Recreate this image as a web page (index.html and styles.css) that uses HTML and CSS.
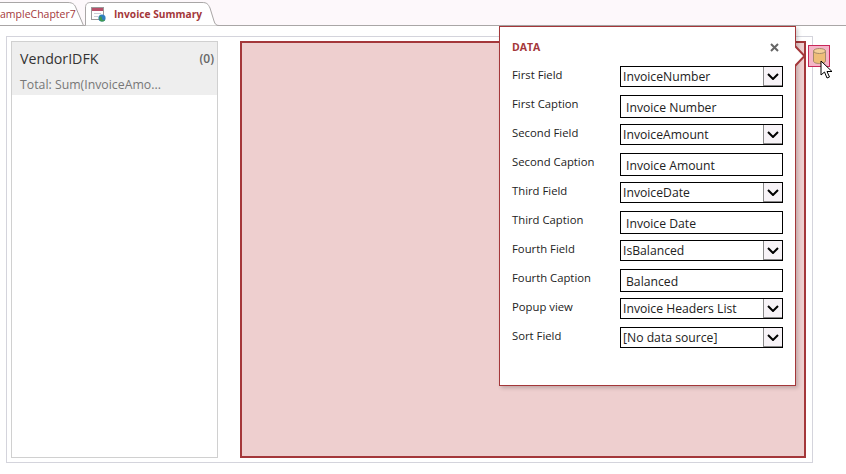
FILE: index.html
```html
<!DOCTYPE html>
<html lang="en">

<head>
    <meta charset="UTF-8">
    <meta name="viewport" content="width=device-width, initial-scale=1.0">
    <title>Invoice Summary</title>
    <link rel="stylesheet" href="styles.css">
</head>

<body>

    <div class="tabbar">
        <div class="tab tab-other">
            <svg class="tab-shape" width="86" height="26" viewBox="0 0 86 26">
                <path d="M0 2.5H68C73 2.5 75 5 76 8L83.5 25.5H0" fill="#fff" stroke="#a9a6a6" />
            </svg>
            <span class="tab-text">ampleChapter7</span>
        </div>
        <div class="tab tab-active">
            <svg class="tab-shape" width="135" height="26" viewBox="0 0 135 26">
                <path d="M0.5 25.5V8C0.5 4 2 2.5 6 2.5H117C122 2.5 123 4 125 8L129 21C130 24 131 25.5 134 25.5H135" fill="#fff" stroke="#a9a6a6" />
            </svg>
            <svg class="tab-icon" width="15" height="15" viewBox="0 0 15 15">
                <rect x="0.5" y="0.5" width="12" height="12" fill="#fff" stroke="#9a9a9a" />
                <rect x="1" y="1" width="11" height="3" fill="#b8506a" />
                <rect x="3" y="6" width="7" height="1" fill="#c9ced6" />
                <rect x="3" y="9" width="4" height="1" fill="#c9ced6" />
                <circle cx="11" cy="11" r="3.6" fill="#2f7fc0" />
                <path d="M8.5 9.5C10 9 11 10 11 11.5S13 14 14 12.5C14.5 13.5 12.5 14.6 11 14.6C9 14.6 7.5 12 8.5 9.5Z" fill="#3f9a4f" />
            </svg>
            <span class="tab-text tab-text-active">Invoice Summary</span>
        </div>
    </div>

    <div class="canvas">
        <div class="list-panel">
            <div class="list-head">
                <div class="list-title">
                    <span class="list-name">VendorIDFK</span>
                    <span class="list-count">(0)</span>
                </div>
                <div class="list-total">Total: Sum(InvoiceAmo...</div>
            </div>
        </div>
        <div class="detail-box"></div>
    </div>

    <div class="popup">
        <div class="popup-head">
            <span class="popup-title">DATA</span>
            <svg class="popup-close" width="9" height="9" viewBox="0 0 9 9">
                <path d="M1 1L8 8M8 1L1 8" stroke="#666" stroke-width="2" />
            </svg>
        </div>
        <div class="popup-form">
            <label>First Field</label>
            <div class="combo">InvoiceNumber<span class="combo-btn"><svg width="12" height="7" viewBox="0 0 12 7"><path d="M1 1L6 6L11 1" fill="none" stroke="#000" stroke-width="2" /></svg></span></div>
            <label>First Caption</label>
            <div class="textbox">Invoice Number</div>
            <label>Second Field</label>
            <div class="combo">InvoiceAmount<span class="combo-btn"><svg width="12" height="7" viewBox="0 0 12 7"><path d="M1 1L6 6L11 1" fill="none" stroke="#000" stroke-width="2" /></svg></span></div>
            <label>Second Caption</label>
            <div class="textbox">Invoice Amount</div>
            <label>Third Field</label>
            <div class="combo">InvoiceDate<span class="combo-btn"><svg width="12" height="7" viewBox="0 0 12 7"><path d="M1 1L6 6L11 1" fill="none" stroke="#000" stroke-width="2" /></svg></span></div>
            <label>Third Caption</label>
            <div class="textbox">Invoice Date</div>
            <label>Fourth Field</label>
            <div class="combo">IsBalanced<span class="combo-btn"><svg width="12" height="7" viewBox="0 0 12 7"><path d="M1 1L6 6L11 1" fill="none" stroke="#000" stroke-width="2" /></svg></span></div>
            <label>Fourth Caption</label>
            <div class="textbox">Balanced</div>
            <label>Popup view</label>
            <div class="combo">Invoice Headers List<span class="combo-btn"><svg width="12" height="7" viewBox="0 0 12 7"><path d="M1 1L6 6L11 1" fill="none" stroke="#000" stroke-width="2" /></svg></span></div>
            <label>Sort Field</label>
            <div class="combo">[No data source]<span class="combo-btn"><svg width="12" height="7" viewBox="0 0 12 7"><path d="M1 1L6 6L11 1" fill="none" stroke="#000" stroke-width="2" /></svg></span></div>
        </div>
    </div>

    <svg class="popup-arrow" width="12" height="24" viewBox="0 0 12 24">
        <path d="M0 2L9.5 12L0 22" fill="#fff" stroke="#a4373a" stroke-width="2" />
    </svg>

    <div class="data-btn">
        <svg width="13" height="16" viewBox="0 0 13 16">
            <path d="M0.5 3V13C0.5 14.5 3 15.5 6.5 15.5S12.5 14.5 12.5 13V3Z" fill="#eebd78" stroke="#a58a6a" />
            <ellipse cx="6.5" cy="3" rx="6" ry="2.5" fill="#f4cf98" stroke="#a58a6a" />
        </svg>
    </div>

    <svg class="cursor" width="14" height="20" viewBox="0 0 14 20">
        <path d="M1 1V15L4.5 12L7 18L9.5 17L7 11.5H12Z" fill="#fff" stroke="#000" />
    </svg>

</body>

</html>
```

FILE: styles.css
```css
* {
    margin: 0;
    padding: 0;
    box-sizing: border-box;
    font-family: "Open Sans", "Noto Sans", Arial, sans-serif;
}

body {
    width: 846px;
    height: 474px;
    background: #fff;
    overflow: hidden;
    position: relative;
}

.tabbar {
    display: flex;
    height: 26px;
    background: #fdf8fb;
    border-bottom: 1px solid #a9a6a6;
}

.tab {
    position: relative;
    height: 26px;
    display: flex;
    align-items: center;
}

.tab-shape {
    position: absolute;
    left: 0;
    top: 0;
}

.tab-other {
    width: 85px;
}

.tab-active {
    width: 135px;
    padding-left: 6px;
}

.tab-icon {
    position: relative;
    margin-right: 8px;
    margin-top: 3px;
}

.tab-text {
    position: relative;
    font-size: 10.5px;
    color: #a4373a;
    margin-top: 2px;
}

.tab-text-active {
    font-weight: 700;
    font-size: 10.2px;
}

.canvas {
    display: flex;
    width: 807px;
    height: 427px;
    margin: 10px 0 0 6px;
    padding: 4px 6px 4px 4px;
    gap: 22px;
    border: 1px solid #d4d4dc;
}

.list-panel {
    width: 207px;
    border: 1px solid #d0d0d0;
}

.list-head {
    height: 53px;
    padding: 7px 3px 0 8px;
    background: #eeeeee;
}

.list-title {
    display: flex;
    justify-content: space-between;
    align-items: center;
}

.list-name {
    font-size: 14.2px;
    color: #333;
}

.list-count {
    font-size: 12px;
    font-weight: 600;
    color: #666;
}

.list-total {
    margin-top: 8px;
    font-size: 12.3px;
    color: #777;
}

.detail-box {
    width: 566px;
    height: 417px;
    background: #eecfcf;
    border: 2px solid #a4373a;
}

.popup {
    position: absolute;
    left: 499px;
    top: 26px;
    width: 297px;
    height: 360px;
    padding: 13px 13px 0 12px;
    background: #fff;
    border: 1px solid #a4373a;
    box-shadow: 2px 2px 4px rgba(0, 0, 0, 0.2);
}

.popup-head {
    display: flex;
    justify-content: space-between;
    align-items: center;
    height: 14px;
}

.popup-title {
    font-size: 10.5px;
    font-weight: 700;
    color: #a4373a;
}

.popup-close {
    margin-right: 3px;
}

.popup-form {
    display: grid;
    grid-template-columns: 108px 163px;
    grid-auto-rows: 23px;
    row-gap: 6px;
    margin-top: 12px;
}

.popup-form label {
    font-size: 11.3px;
    color: #222;
    line-height: 17px;
}

.combo,
.textbox {
    position: relative;
    border: 1px solid #000;
    font-size: 12.2px;
    color: #222;
    background: #fff;
}

.combo {
    height: 21px;
    padding-left: 2px;
    line-height: 19px;
}

.textbox {
    height: 23px;
    padding-left: 5px;
    line-height: 23px;
}

.combo-btn {
    position: absolute;
    right: 0;
    top: 0;
    width: 19px;
    height: 19px;
    display: flex;
    align-items: center;
    justify-content: center;
    background: #f7f3f7;
    border-left: 1px solid #888;
    border-bottom: 1px solid #888;
}

.popup-arrow {
    position: absolute;
    left: 795px;
    top: 44px;
}

.data-btn {
    position: absolute;
    left: 808px;
    top: 45px;
    width: 22px;
    height: 22px;
    display: flex;
    align-items: center;
    justify-content: center;
    background: #f5b5c8;
    border: 1px solid #c8285a;
}

.cursor {
    position: absolute;
    left: 820px;
    top: 60px;
}
```
